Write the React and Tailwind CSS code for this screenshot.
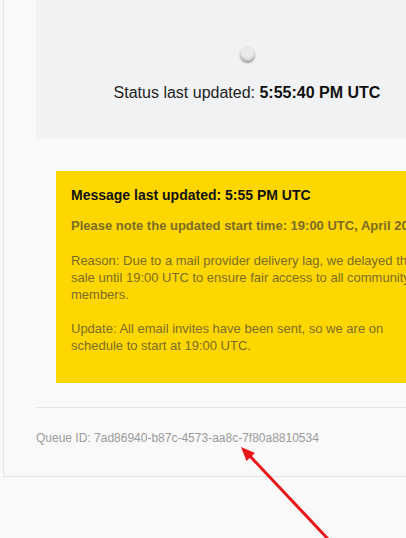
import React from "react";

export default function App() {
  return (
    <div className="relative w-[406px] h-[538px] overflow-hidden bg-[#f9f9f9] font-['Liberation_Sans',Arial,sans-serif]">
      <div className="ml-[3px] w-[488px] border border-t-0 border-[#e4e4e4] bg-[#f9f9f9] px-8 pb-[31px]">
        <div className="h-[138px] bg-[#f1f2f4] flex flex-col items-center pt-[46px]">
          <div className="w-[15px] h-[15px] rounded-full bg-[#e9e9e9] shadow-[inset_0_-2px_2px_rgba(0,0,0,0.12),0_2px_2px_rgba(0,0,0,0.35)]" />
          <div className="mt-[23px] text-[16px] leading-[18px] text-[#222]">
            Status last updated: <span className="font-bold text-[#111]">5:55:40 PM UTC</span>
          </div>
        </div>
        <div className="mx-5 mt-[33px] bg-[#ffd700] px-[15px] pt-[16px] pb-[29px] text-[13px] leading-[17px]">
          <p className="text-[14px] font-bold text-[#111] mb-[13px] whitespace-nowrap">Message last updated: 5:55 PM UTC</p>
          <p className="font-bold text-[#7b6c28] mb-[18px] whitespace-nowrap">Please note the updated start time: 19:00 UTC, April 20.</p>
          <p className="text-[#7b6c28] mb-[17px]">
            Reason: Due to a mail provider delivery lag, we delayed the sale until 19:00 UTC to ensure fair access to all community members.
          </p>
          <p className="text-[#7b6c28]">
            Update: All email invites have been sent, so we are on schedule to start at 19:00 UTC.
          </p>
        </div>
        <div className="mt-[24px] border-t border-[#e6e6e6]" />
        <div className="pt-[23px] text-[12px] leading-[14px] text-[#9a9a9a]">
          Queue ID: 7ad86940-b87c-4573-aa8c-7f80a8810534
        </div>
      </div>
      <svg className="absolute left-0 top-0" width="406" height="538" viewBox="0 0 406 538">
        <line x1="328" y1="539" x2="249" y2="455" stroke="#e8161b" strokeWidth="3" />
        <polygon points="241,447 246.5,461 255,453" fill="#e8161b" />
      </svg>
    </div>
  );
}
